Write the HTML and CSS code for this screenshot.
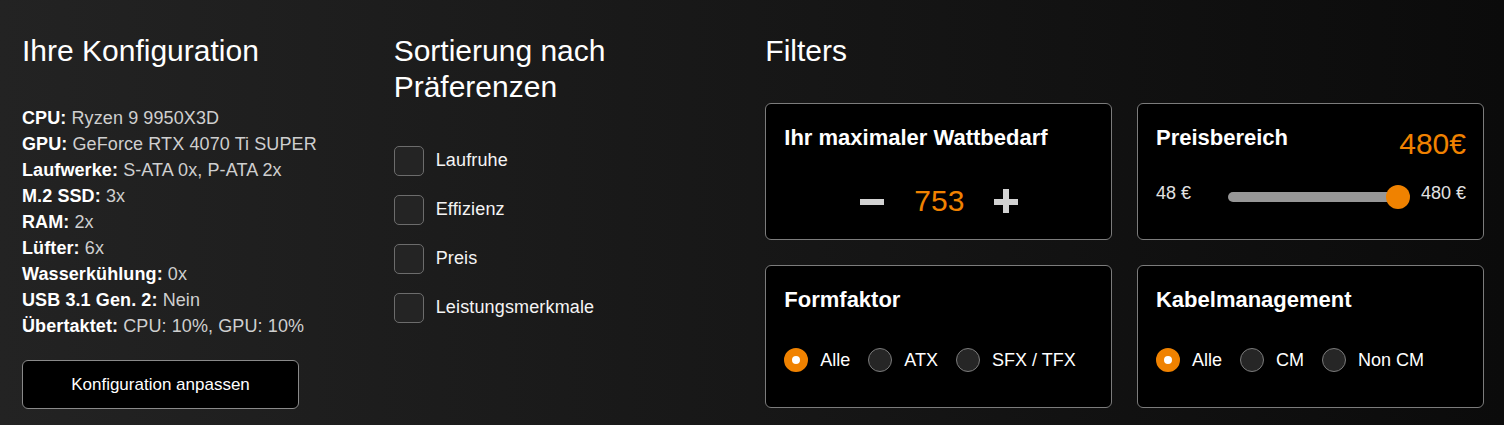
FILE: index.html
```html
<!DOCTYPE html>
<html lang="de">
<head>
<meta charset="utf-8">
<title>Konfiguration</title>
<link rel="stylesheet" href="styles.css">
</head>
<body>
<main class="layout">
  <section class="config">
    <h2 class="heading">Ihre Konfiguration</h2>
    <div class="specs">
      <div class="spec"><strong>CPU:</strong> Ryzen 9 9950X3D</div>
      <div class="spec"><strong>GPU:</strong> GeForce RTX 4070 Ti SUPER</div>
      <div class="spec"><strong>Laufwerke:</strong> S-ATA 0x, P-ATA 2x</div>
      <div class="spec"><strong>M.2 SSD:</strong> 3x</div>
      <div class="spec"><strong>RAM:</strong> 2x</div>
      <div class="spec"><strong>Lüfter:</strong> 6x</div>
      <div class="spec"><strong>Wasserkühlung:</strong> 0x</div>
      <div class="spec"><strong>USB 3.1 Gen. 2:</strong> Nein</div>
      <div class="spec"><strong>Übertaktet:</strong> CPU: 10%, GPU: 10%</div>
    </div>
    <button class="btn">Konfiguration anpassen</button>
  </section>

  <section class="sort">
    <h2 class="heading">Sortierung nach Präferenzen</h2>
    <div class="checks">
      <label class="check"><span class="box"></span><span>Laufruhe</span></label>
      <label class="check"><span class="box"></span><span>Effizienz</span></label>
      <label class="check"><span class="box"></span><span>Preis</span></label>
      <label class="check"><span class="box"></span><span>Leistungsmerkmale</span></label>
    </div>
  </section>

  <section class="filters">
    <h2 class="heading">Filters</h2>
    <div class="cards">
      <div class="card">
        <div class="card-title">Ihr maximaler Wattbedarf</div>
        <div class="stepper">
          <svg class="step-icon" width="24" height="24" viewBox="0 0 24 24"><rect x="0" y="10" width="24" height="6" fill="#d2d2d2"/></svg>
          <span class="step-value">753</span>
          <svg class="step-icon" width="24" height="24" viewBox="0 0 24 24"><rect x="0" y="10" width="24" height="6" fill="#d2d2d2"/><rect x="9" y="0" width="6" height="25" fill="#d2d2d2"/></svg>
        </div>
      </div>

      <div class="card">
        <div class="card-head">
          <div class="card-title">Preisbereich</div>
          <div class="price">480€</div>
        </div>
        <div class="slider-row">
          <span class="slider-label">48 €</span>
          <div class="track"><span class="thumb"></span></div>
          <span class="slider-label">480 €</span>
        </div>
      </div>

      <div class="card card-radio">
        <div class="card-title">Formfaktor</div>
        <div class="radios">
          <label class="radio"><span class="dot checked"></span><span>Alle</span></label>
          <label class="radio"><span class="dot"></span><span>ATX</span></label>
          <label class="radio"><span class="dot"></span><span>SFX / TFX</span></label>
        </div>
      </div>

      <div class="card card-radio">
        <div class="card-title">Kabelmanagement</div>
        <div class="radios">
          <label class="radio"><span class="dot checked"></span><span>Alle</span></label>
          <label class="radio"><span class="dot"></span><span>CM</span></label>
          <label class="radio"><span class="dot"></span><span>Non CM</span></label>
        </div>
      </div>
    </div>
  </section>
</main>
</body>
</html>
```

FILE: styles.css
```css
* { box-sizing: border-box; }

html, body {
  margin: 0;
  height: 100%;
}

body {
  background: linear-gradient(to right, #232323 0%, #171717 50%, #0b0b0b 100%);
  color: #fff;
  font-family: "Liberation Sans", Arial, sans-serif;
  overflow: hidden;
}

.layout {
  display: grid;
  grid-template-columns: 347px 347px 347px 347px;
  column-gap: 24.67px;
  padding: 33px 0 0 22px;
}

.heading {
  margin: 0;
  font-size: 30px;
  line-height: 36px;
  font-weight: normal;
  color: #fff;
}

/* Column 1 */
.specs {
  margin-top: 36px;
  font-size: 18px;
  line-height: 26px;
  color: #cfcfcf;
  letter-spacing: 0.1px;
}

.spec strong {
  color: #fff;
  font-weight: bold;
}

.btn {
  display: block;
  margin-top: 21px;
  width: 277px;
  height: 49px;
  background: #000;
  color: #fff;
  border: 1px solid #8a8a8a;
  border-radius: 6px;
  font-family: "Liberation Sans", Arial, sans-serif;
  font-size: 17px;
  padding: 0;
}

/* Column 2 */
.sort .heading {
  width: 260px;
}

.checks {
  margin-top: 41px;
  display: flex;
  flex-direction: column;
  gap: 20px;
}

.check {
  display: flex;
  align-items: center;
  gap: 12px;
  font-size: 18px;
  letter-spacing: 0.15px;
  color: #f4f4f4;
  height: 29px;
}

.box {
  width: 30px;
  height: 30px;
  border: 1px solid #6c6c6c;
  border-radius: 5px;
  background: #242424;
  flex: none;
}

/* Filters */
.filters {
  grid-column: 3 / span 2;
}

.cards {
  margin-top: 34px;
  display: grid;
  grid-template-columns: 1fr 1fr;
  column-gap: 24.67px;
  row-gap: 25px;
}

.card {
  background: #000;
  border: 1px solid #7c7c7c;
  border-radius: 6px;
  padding: 21px 17px 21px 18px;
}

.card-title {
  font-size: 22px;
  line-height: 25px;
  font-weight: bold;
  color: #fff;
}

.stepper {
  margin-top: 34px;
  height: 34px;
  display: flex;
  align-items: center;
  justify-content: center;
  gap: 30px;
}

.step-icon {
  display: block;
  flex: none;
}

.step-value {
  font-size: 30px;
  line-height: 34px;
  color: #f08200;
}

.card-head {
  display: flex;
  justify-content: space-between;
  align-items: flex-start;
}

.price {
  margin-top: 2px;
  font-size: 30px;
  line-height: 34px;
  color: #f08200;
}

.slider-row {
  margin-top: 24px;
  height: 24px;
  display: flex;
  align-items: center;
}

.slider-label {
  font-size: 18px;
  color: #e2e2e2;
  flex: none;
  margin-bottom: 7px;
}

.track {
  position: relative;
  flex: 1;
  height: 10px;
  margin: 0 12px 0 37px;
  border-radius: 5px;
  background: #979797;
}

.thumb {
  position: absolute;
  right: -1px;
  top: 50%;
  width: 24px;
  height: 24px;
  margin-top: -12px;
  border-radius: 50%;
  background: #f08200;
}

.card-radio {
  padding-bottom: 35px;
}

.radios {
  margin-top: 36px;
  display: flex;
  align-items: center;
  gap: 18px;
  height: 24px;
}

.radio {
  display: flex;
  align-items: center;
  gap: 12px;
  font-size: 18px;
  color: #fff;
}

.dot {
  width: 24px;
  height: 24px;
  border-radius: 50%;
  border: 1px solid #7a7a7a;
  background: #262626;
  flex: none;
}

.dot.checked {
  border: 8px solid #f08200;
  background: #fff;
}
```
